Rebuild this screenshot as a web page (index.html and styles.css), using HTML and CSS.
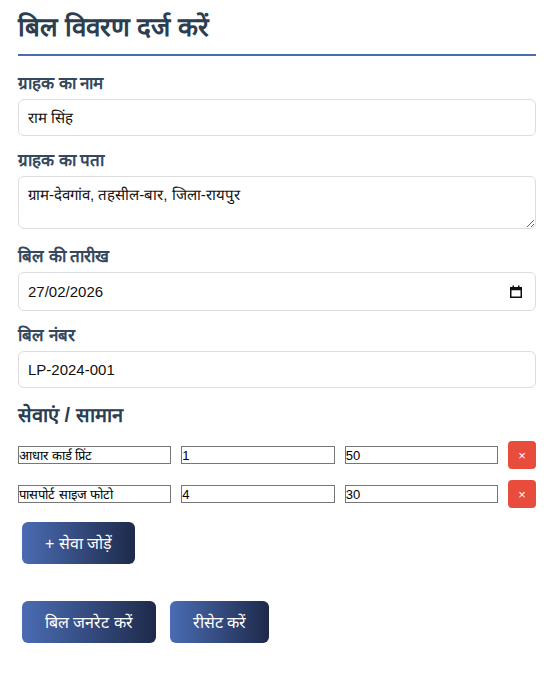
FILE: index.html
```html
<!DOCTYPE html>
<html lang="hi">
<head>
    <meta charset="UTF-8">
    <meta name="viewport" content="width=device-width, initial-scale=1.0">
    <title>बिल विवरण</title>
    <link rel="stylesheet" href="styles.css">
</head>
<body>

    <!-- फॉर्म -->
    <div class="container">
        <h2>बिल विवरण दर्ज करें</h2>

        <div class="form-group">
            <label>ग्राहक का नाम</label>
            <input type="text" class="field" value="राम सिंह">
        </div>

        <div class="form-group group-area">
            <label>ग्राहक का पता</label>
            <textarea class="field" rows="2">ग्राम-देवगांव, तहसील-बार, जिला-रायपुर</textarea>
        </div>

        <div class="form-group">
            <label>बिल की तारीख</label>
            <div class="date-wrap">
                <input type="text" class="field date-field" value="27/02/2026">
                <svg class="cal-icon" width="12" height="13" viewBox="0 0 12 13">
                    <rect x="0.75" y="2.75" width="10.5" height="9.5" fill="none" stroke="#111" stroke-width="1.5"/>
                    <rect x="0.75" y="2.75" width="10.5" height="2.5" fill="#111"/>
                    <rect x="2.5" y="0.5" width="1.5" height="3" fill="#111"/>
                    <rect x="8" y="0.5" width="1.5" height="3" fill="#111"/>
                </svg>
            </div>
        </div>

        <div class="form-group">
            <label>बिल नंबर</label>
            <input type="text" class="field" value="LP-2024-001">
        </div>

        <h3>सेवाएं / सामान</h3>

        <div id="items">
            <div class="item-row">
                <input type="text" value="आधार कार्ड प्रिंट">
                <input type="number" value="1">
                <input type="number" value="50">
                <button class="btn-remove">×</button>
            </div>
            <div class="item-row">
                <input type="text" value="पासपोर्ट साइज फोटो">
                <input type="number" value="4">
                <input type="number" value="30">
                <button class="btn-remove">×</button>
            </div>
        </div>

        <button class="btn">+ सेवा जोड़ें</button>

        <div class="actions">
            <button class="btn">बिल जनरेट करें</button>
            <button class="btn">रीसेट करें</button>
        </div>
    </div>

</body>
</html>
```

FILE: styles.css
```css
body {
    font-family: "Segoe UI", Tahoma, Verdana, sans-serif;
    margin: 8px;
    background-color: #fff;
    color: #2c3e50;
}
.container {
    padding: 10px;
    max-width: 518px;
}
h2 {
    margin: 0 0 17px 0;
    padding-bottom: 18px;
    font-size: 26px;
    line-height: 18px;
    border-bottom: 2px solid #4a6cb3;
    color: #2c3e50;
}
.form-group {
    margin-bottom: 14px;
}
.form-group label {
    display: block;
    font-weight: bold;
    font-size: 17px;
    line-height: 22px;
    margin-bottom: 4px;
    color: #34495e;
}
.group-area {
    padding-bottom: 3px;
}
.field {
    display: block;
    width: 100%;
    box-sizing: border-box;
    padding: 9px;
    border: 1px solid #ddd;
    border-radius: 6px;
    font-family: "Liberation Sans", Arial, sans-serif;
    font-size: 15px;
    line-height: 17px;
    color: #111;
}
textarea.field {
    height: 53px;
    resize: vertical;
}
.date-wrap {
    position: relative;
}
.date-field {
    height: 39px;
}
.cal-icon {
    position: absolute;
    right: 14px;
    top: 13px;
}
h3 {
    font-size: 20px;
    line-height: 26px;
    margin: 12px 0 13px 0;
    color: #2c3e50;
}
/* सेवा पंक्तियाँ */
.item-row {
    display: flex;
    align-items: center;
    gap: 10px;
    margin-bottom: 11px;
}
.item-row input {
    flex: 1;
    min-width: 0;
    padding: 0;
    border: 1px solid #767676;
    font-family: "Liberation Sans", Arial, sans-serif;
    font-size: 13px;
    height: 16px;
    box-sizing: content-box;
}
.btn-remove {
    width: 28px;
    height: 28px;
    flex: none;
    border: none;
    border-radius: 4px;
    background-color: #e74c3c;
    color: white;
    font-size: 13px;
    cursor: pointer;
}
/* बटन */
.btn {
    margin: 3px 4px 4px 4px;
    padding: 0 23px;
    height: 42px;
    border: none;
    border-radius: 6px;
    background: linear-gradient(to right, #4a6cb3, #1e2a4a);
    color: white;
    font-family: "Liberation Sans", Arial, sans-serif;
    font-size: 16px;
    cursor: pointer;
}
.actions {
    margin-top: 30px;
    display: flex;
    gap: 6px;
}
```
